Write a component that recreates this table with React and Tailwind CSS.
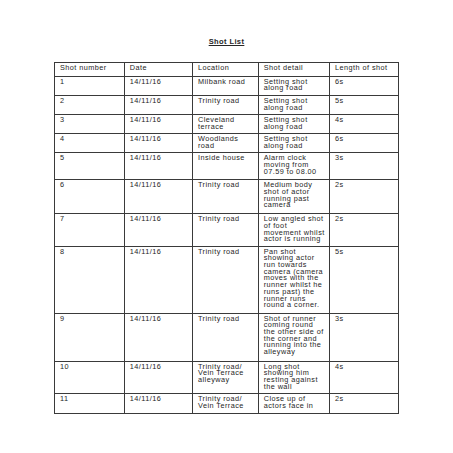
const rows = [
  { h: "h-[13.4px]", cells: ["Shot number", "Date", "Location", "Shot detail", "Length of shot"] },
  { h: "h-[19.3px]", cells: ["1", "14/11/16", "Milbank  road", "Setting shot\nalong road", "6s"] },
  { h: "h-[19.3px]", cells: ["2", "14/11/16", "Trinity road", "Setting shot\nalong road", "5s"] },
  { h: "h-[19px]", cells: ["3", "14/11/16", "Cleveland\nterrace", "Setting shot\nalong road", "4s"] },
  { h: "h-[19px]", cells: ["4", "14/11/16", "Woodlands\nroad", "Setting shot\nalong road", "6s"] },
  { h: "h-[27px]", cells: ["5", "14/11/16", "Inside house", "Alarm clock\nmoving from\n07.59 to 08.00", "3s"] },
  { h: "h-[34px]", cells: ["6", "14/11/16", "Trinity road", "Medium body\nshot of actor\nrunning past\ncamera", "2s"] },
  { h: "h-[32.4px]", cells: ["7", "14/11/16", "Trinity road", "Low angled shot\nof foot\nmovement whilst\nactor is running", "2s"] },
  {
    h: "h-[67px]",
    cells: [
      "8",
      "14/11/16",
      "Trinity road",
      "Pan shot\nshowing actor\nrun towards\ncamera (camera\nmoves with the\nrunner whilst he\nruns past) the\nrunner runs\nround a corner.",
      "5s",
    ],
  },
  {
    h: "h-[48px]",
    cells: ["9", "14/11/16", "Trinity road", "Shot of runner\ncoming round\nthe other side of\nthe corner and\nrunning into the\nalleyway", "3s"],
  },
  {
    h: "h-[32.6px]",
    cells: ["10", "14/11/16", "Trinity road/\nVein Terrace\nalleyway", "Long shot\nshowing him\nresting against\nthe wall", "4s"],
  },
  { h: "h-[19.4px]", cells: ["11", "14/11/16", "Trinity road/\nVein Terrace", "Close up of\nactors face in", "2s"] },
];

export default function App() {
  return (
    <main
      className="h-[453px] w-[453px] overflow-hidden bg-white text-[#262626]"
      style={{ fontFamily: '"Liberation Sans", Arial, sans-serif' }}
    >
      <div className="pt-[37px] text-center text-[7.5px] font-bold leading-[10px] tracking-[0.4px] underline">
        Shot List
      </div>
      <div className="mx-auto mt-[15.3px] grid w-[345px] grid-cols-[69.7px_68.3px_65.7px_71.3px_69px] border-l border-t border-[#3a3a3a]">
        {rows.map((row, i) =>
          row.cells.map((cell, j) => (
            <div
              key={`${i}-${j}`}
              className={`${row.h} whitespace-pre-line border-b border-r border-[#3a3a3a] pl-[5px] pt-[2px] text-[7.3px] leading-[6.7px] tracking-[0.45px]`}
            >
              {cell}
            </div>
          ))
        )}
      </div>
    </main>
  );
}
